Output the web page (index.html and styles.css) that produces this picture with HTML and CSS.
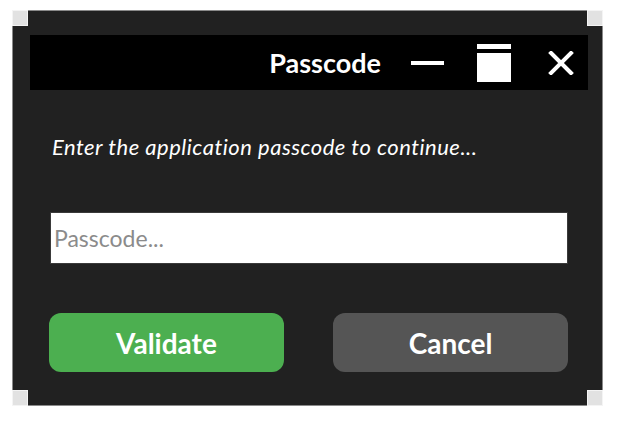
FILE: index.html
```html
<!DOCTYPE html>
<html>
<head>
<meta charset="utf-8">
<link rel="stylesheet" href="styles.css">
</head>
<body>
<div class="window">
  <div class="titlebar">
    <span class="title">Passcode</span>
    <svg class="tb-min" width="33" height="4" viewBox="0 0 33 4"><rect x="0" y="0" width="33" height="4" fill="#fff"/></svg>
    <svg class="tb-max" width="34" height="38" viewBox="0 0 34 38"><rect x="0" y="0" width="34" height="5" fill="#fff"/><rect x="0" y="9" width="34" height="29" fill="#fff"/></svg>
    <svg class="tb-close" width="26" height="24" viewBox="0 0 26 24"><path d="M3 2 L23 22 M23 2 L3 22" stroke="#fff" stroke-width="4" stroke-linecap="square"/></svg>
  </div>
  <div class="content">
    <p class="prompt">Enter the application passcode to continue...</p>
    <input class="passcode" type="password" placeholder="Passcode...">
    <div class="actions">
      <button class="btn btn-validate">Validate</button>
      <button class="btn btn-cancel">Cancel</button>
    </div>
  </div>
  <span class="grip grip-tl"></span>
  <span class="grip grip-tr"></span>
  <span class="grip grip-bl"></span>
  <span class="grip grip-br"></span>
</div>
</body>
</html>
```
FILE: styles.css
```css
html, body {
  margin: 0;
  padding: 0;
  background: #ffffff;
}
body {
  font-family: "Lato", "Open Sans", sans-serif;
  padding: 10px 0 0 12px;
}
.window {
  position: relative;
  box-sizing: border-box;
  width: 591px;
  height: 396px;
  background: #212121;
  border: 1px solid #8a8a8a;
  display: flex;
  flex-direction: column;
}
.titlebar {
  box-sizing: border-box;
  height: 55px;
  margin: 24px 14px 0 17px;
  background: #000;
  display: flex;
  align-items: center;
  justify-content: flex-end;
  padding-right: 14px;
}
.title {
  color: #fff;
  font-weight: 700;
  font-size: 27px;
  line-height: 30px;
}
.tb-min { margin-left: 30px; }
.tb-max { margin-left: 33px; }
.tb-close { margin-left: 37px; }
.content {
  padding: 0 34px 0 36px;
  display: flex;
  flex-direction: column;
}
.prompt {
  margin: 44px 0 0 3px;
  color: #fff;
  font-style: italic;
  font-size: 22px;
  letter-spacing: 0.5px;
  line-height: 26px;
}
.passcode {
  box-sizing: border-box;
  margin: 52px 0 0 1px;
  width: 518px;
  height: 52px;
  border: 1px solid #3a3a3a;
  background: #fff;
  padding: 0 3px;
  font-family: "Lato", "Open Sans", sans-serif;
  font-size: 23px;
  outline: none;
}
.passcode::placeholder {
  color: #8b8b8b;
}
.actions {
  margin-top: 49px;
  display: flex;
  gap: 49px;
}
.btn {
  width: 236px;
  height: 59px;
  border: none;
  border-radius: 12px;
  color: #fff;
  font-family: "Lato", "Open Sans", sans-serif;
  font-weight: 700;
  font-size: 28px;
  padding: 0;
}
.btn-validate { background: #4caf50; }
.btn-cancel { background: #555555; }
.grip {
  position: absolute;
  width: 14px;
  height: 14px;
  background: #e2e2e2;
  border: 1px solid #f4f4f4;
}
.grip-tl { top: -1px; left: -1px; }
.grip-tr { top: -1px; right: -1px; }
.grip-bl { bottom: -1px; left: -1px; }
.grip-br { bottom: -1px; right: -1px; }
```
